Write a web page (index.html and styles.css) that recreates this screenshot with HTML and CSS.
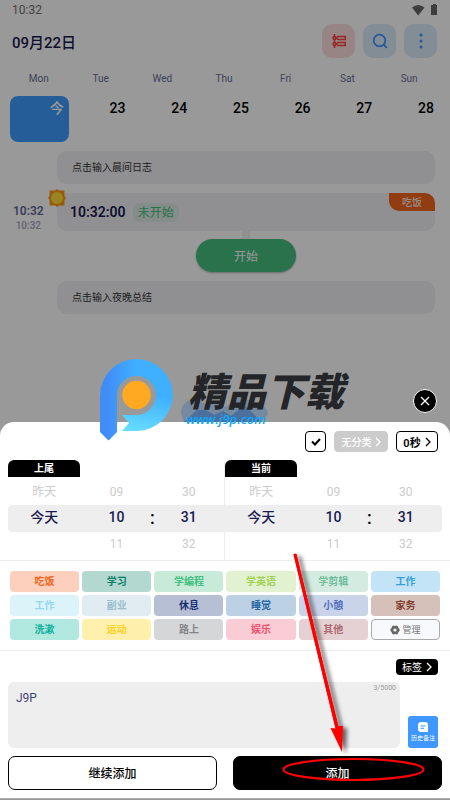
FILE: index.html
```html
<!DOCTYPE html>
<html lang="zh-CN">
<head>
    <meta charset="UTF-8">
    <meta name="viewport" content="width=device-width, initial-scale=1.0">
    <title>添加记录</title>
    <link rel="stylesheet" href="styles.css">
</head>
<body>
<div class="screen">
    <main class="schedule">
        <div class="status-bar">
            <span>10:32</span>
            <svg width="26" height="12" viewBox="0 0 26 12" fill="#686868">
                <path d="M0 3.5Q6.2-1.5 12.5 3.5L6.2 11.5Z"/>
                <path d="M20 1h1V0h3v1h1v10h-6V1z"/>
            </svg>
        </div>

        <header class="header">
            <h1>09月22日</h1>
            <button class="icon-btn red" aria-label="时间轴">
                <svg width="16" height="16" viewBox="0 0 16 16" fill="none" stroke="#f9453e" stroke-width="1.6">
                    <path d="M3.500 1v14"/>
                    <circle cx="3.500" cy="5" r="1.400" fill="#fde3e3"/>
                    <circle cx="3.500" cy="11" r="1.400" fill="#fde3e3"/>
                    <path d="M7 3.500h7.200v3H7L5.500 5zM7 9.500h7.200v3H7L5.500 11z"/>
                </svg>
            </button>
            <button class="icon-btn" aria-label="搜索">
                <svg width="16" height="16" viewBox="0 0 16 16" fill="none" stroke="#3e95ff" stroke-width="1.8" stroke-linecap="round">
                    <circle cx="7.500" cy="7.500" r="5.800"/>
                    <path d="M12 12l2.300 2.300"/>
                </svg>
            </button>
            <button class="icon-btn" aria-label="更多">
                <svg width="16" height="16" viewBox="0 0 16 16" fill="#3e95ff">
                    <circle cx="8" cy="2" r="1.500"/>
                    <circle cx="8" cy="8" r="1.500"/>
                    <circle cx="8" cy="14" r="1.500"/>
                </svg>
            </button>
        </header>

        <div class="week names">
            <span>Mon</span><span>Tue</span><span>Wed</span><span>Thu</span><span>Fri</span><span>Sat</span><span>Sun</span>
        </div>
        <div class="week dates">
            <span class="today">今</span><span>23</span><span>24</span><span>25</span><span>26</span><span>27</span><span>28</span>
        </div>

        <div class="timeline">
            <div class="note">点击输入晨间日志</div>
            <div class="event">
                <div class="event-time">
                    <b>10:32</b>
                    <small>10:32</small>
                </div>
                <svg class="sun" width="18" height="18" viewBox="0 0 18 18">
                    <path d="M9 0l2 1.500h5.500V7L18 9l-1.500 2v5.500H11L9 18l-2-1.500H1.500V11L0 9l1.500-2V1.500H7z" fill="#ff980c"/>
                    <circle cx="9" cy="9" r="6" fill="#ffdf3a"/>
                </svg>
                <strong>10:32:00</strong>
                <span class="state">未开始</span>
                <span class="event-tag">吃饭</span>
            </div>
            <div class="connector"></div>
            <button class="start-btn">开始</button>
            <div class="note">点击输入夜晚总结</div>
        </div>
    </main>

    <div class="overlay"></div>

    <section class="sheet">
        <button class="close-btn" aria-label="关闭">
            <svg width="10" height="10" viewBox="0 0 10 10" stroke="#fff" stroke-width="1.3">
                <path d="M1 1l8 8M9 1L1 9"/>
            </svg>
        </button>

        <div class="options">
            <button class="option check" aria-label="确认">
                <svg width="10" height="8" viewBox="0 0 10 8" fill="none" stroke="#000" stroke-width="2">
                    <path d="M1 3.500l3 3L9 1"/>
                </svg>
            </button>
            <button class="option muted">无分类
                <svg width="6" height="10" viewBox="0 0 6 10" fill="none" stroke="#fff" stroke-width="1.3"><path d="M1 1l4 4-4 4"/></svg>
            </button>
            <button class="option seconds">0秒
                <svg width="6" height="10" viewBox="0 0 6 10" fill="none" stroke="#000" stroke-width="1.3"><path d="M1 1l4 4-4 4"/></svg>
            </button>
        </div>

        <div class="pickers">
            <div class="picker">
                <button class="picker-tab">上尾</button>
                <div class="wheel before"><span>昨天</span><span>09</span><span>30</span></div>
                <div class="wheel selected"><span>今天</span><span>10</span><span>31</span><i>:</i></div>
                <div class="wheel after"><span></span><span>11</span><span>32</span></div>
            </div>
            <div class="picker">
                <button class="picker-tab">当前</button>
                <div class="wheel before"><span>昨天</span><span>09</span><span>30</span></div>
                <div class="wheel selected"><span>今天</span><span>10</span><span>31</span><i>:</i></div>
                <div class="wheel after"><span></span><span>11</span><span>32</span></div>
            </div>
        </div>

        <div class="categories">
            <button class="eat">吃饭</button>
            <button class="study">学习</button>
            <button class="code">学编程</button>
            <button class="english">学英语</button>
            <button class="edit">学剪辑</button>
            <button class="work">工作</button>
            <button class="work-light">工作</button>
            <button class="side">副业</button>
            <button class="rest">休息</button>
            <button class="sleep">睡觉</button>
            <button class="nap">小憩</button>
            <button class="chores">家务</button>
            <button class="wash">洗漱</button>
            <button class="sport">运动</button>
            <button class="road">路上</button>
            <button class="fun">娱乐</button>
            <button class="other">其他</button>
            <button class="manage">
                <svg width="10" height="10" viewBox="0 0 10 10">
                    <path d="M3.500 0.500L5 1.100l1.500-.6 1.600 1 .2 1.600L9.600 4v2l-1.300.9-.2 1.600-1.600 1L5 8.900l-1.500.6-1.600-1-.2-1.600L.4 6V4l1.300-.9.2-1.600z" fill="#666"/>
                    <circle cx="5" cy="5" r="1.600" fill="#f8f9fd"/>
                </svg>管理
            </button>
        </div>

        <div class="tags">
            <button class="tag-btn">标签
                <svg width="6" height="10" viewBox="0 0 6 10" fill="none" stroke="#fff" stroke-width="1.3"><path d="M1 1l4 4-4 4"/></svg>
            </button>
        </div>

        <div class="remark">
            <div class="remark-box">
                <textarea aria-label="备注">J9P</textarea>
                <span class="counter">3/5000</span>
            </div>
            <button class="history-btn">
                <svg width="10" height="10" viewBox="0 0 10 10">
                    <path d="M3 0h4q3 0 3 3v7H3q-3 0-3-3V3q0-3 3-3z" fill="#fff"/>
                    <path d="M2.500 4h5M2.500 6.300h3.500" stroke="#3e98ff" stroke-width="1"/>
                </svg>
                历史备注
            </button>
        </div>

        <div class="actions">
            <button>继续添加</button>
            <button class="primary">添加</button>
        </div>
    </section>

    <svg class="marks" viewBox="0 0 450 800" preserveAspectRatio="xMidYMin meet">
        <defs>
            <linearGradient id="ring" x1="0" y1="0" x2="1" y2="0">
                <stop offset="0.1" stop-color="#418df8"/>
                <stop offset="0.5" stop-color="#3fb0ff"/>
            </linearGradient>
            <linearGradient id="tail" x1="0.6" y1="0" x2="0.3" y2="1">
                <stop offset="0" stop-color="#3fb0ff"/>
                <stop offset="1" stop-color="#66dcff"/>
            </linearGradient>
            <filter id="shadow" x="-50%" y="-10%" width="200%" height="120%">
                <feDropShadow dx="4" dy="2" stdDeviation="2" flood-opacity="0.6"/>
            </filter>
        </defs>
        <!-- logo -->
        <path d="M100 432V395.500A36.300 36.300 0 0 1 172.800 395.500H156A19.500 19.500 0 0 0 117 395.500V432L108.500 440.500Z" fill="url(#ring)"/>
        <path d="M172.800 395A36 36 0 0 1 136.500 431H122L129 423L122 415H136.500A19.500 19.500 0 0 0 156 395Z" fill="url(#tail)"/>
        <circle cx="136.500" cy="395" r="14.300" fill="#ffa922"/>
        <path d="M181 413q0-11 12-14l13 5 8-4 11 7 15-10 17 6q11 3 11 11l-8 8H184z" fill="#5279a8" opacity=".5"/>
        <path d="M184 422l13-12h9l8 5 9-4 8 5 13-11 18 17z" fill="#315f9c" opacity=".6"/>
        <text class="brand" x="188" y="406">精品下载</text>
        <text class="site" x="186" y="424">www.j9p.com</text>
        <!-- pointer to the add button -->
        <g filter="url(#shadow)">
            <path d="M293.500 554.500q1.500-2 3 0L338.500 726L343 726L342 752L330.500 728L335.500 728.500Z" fill="#f00"/>
            <path d="M295 554L337.500 730" stroke="#f00" stroke-width="3"/>
        </g>
        <ellipse cx="353.500" cy="769.500" rx="70" ry="10.500" fill="none" stroke="#f00" stroke-width="2.200"/>
    </svg>
</div>
</body>
</html>
```
FILE: styles.css
```css
* {
    box-sizing: border-box;
}
body {
    margin: 0;
    background: #fff;
    color: #1b1a50;
    font-family: Roboto, "Noto Sans CJK SC", sans-serif;
    font-size: 12px;
}
button {
    display: flex;
    align-items: center;
    justify-content: center;
    padding: 0;
    border: none;
    font-family: inherit;
    font-size: 12px;
    white-space: nowrap;
    cursor: pointer;
}
.screen {
    position: relative;
    display: flex;
    flex-direction: column;
    min-height: 100vh;
    overflow: hidden;
}
.overlay {
    position: absolute;
    inset: 0;
    background: rgba(0, 0, 0, 0.4);
}

/* schedule */
.schedule {
    flex: 1;
}
.status-bar {
    display: flex;
    align-items: center;
    justify-content: space-between;
    height: 20px;
    padding: 0 12px;
    color: #707070;
}
.header {
    display: flex;
    align-items: center;
    gap: 8px;
    padding: 4px 13px 0 12px;
}
.header h1 {
    flex: 1;
    margin: 0;
    font-size: 15px;
    font-weight: 500;
}
.icon-btn {
    width: 33px;
    height: 34px;
    border-radius: 10px;
    background: #dbebfb;
}
.icon-btn.red {
    background: #fcdedf;
}
.week {
    display: grid;
    grid-template-columns: repeat(7, 1fr);
    padding: 0 10px 0 8px;
}
.names {
    margin-top: 12px;
    color: #696d96;
    font-size: 10px;
    line-height: 17px;
    text-align: center;
}
.dates {
    margin-top: 9px;
    color: #000;
    font-size: 14px;
    font-weight: 500;
    line-height: 24px;
    text-align: right;
}
.dates span {
    height: 46px;
    margin: 0 1px 0 2px;
    padding-right: 5px;
}
.dates .today {
    border-radius: 8px;
    background: #3e9bff;
    color: #fff;
}
.timeline {
    padding: 9px 15px 0 57px;
}
.note,
.event {
    border-radius: 10px;
    background: #f0f0f4;
}
.note {
    padding-left: 15px;
    color: #333;
    font-size: 10px;
    line-height: 33px;
}
.event {
    position: relative;
    display: flex;
    align-items: center;
    gap: 7px;
    height: 38px;
    margin-top: 9px;
    padding-left: 13px;
}
.event strong {
    font-size: 14px;
    font-weight: 600;
}
.event-time {
    position: absolute;
    top: 11px;
    left: -44px;
    display: flex;
    flex-direction: column;
    gap: 1px;
    align-items: center;
    color: #646a98;
    line-height: 14px;
}
.event-time b {
    font-weight: 600;
}
.event-time small {
    color: #a5a7bb;
    font-size: 10px;
    font-weight: 500;
}
.sun {
    position: absolute;
    top: -4px;
    left: -9px;
}
.state {
    height: 19px;
    padding: 0 5px;
    border-radius: 6px;
    background: #dcebe5;
    color: #43be7e;
    line-height: 21px;
}
.event-tag {
    position: absolute;
    top: 0;
    right: 0;
    width: 46px;
    height: 18px;
    border-radius: 0 10px 0 10px;
    background: #f2651d;
    color: #fff;
    font-size: 10px;
    line-height: 19px;
    text-align: center;
}
.connector {
    width: 8px;
    height: 8px;
    margin: 0 auto;
    background: #f0f0f4;
}
.start-btn {
    width: 100px;
    height: 33px;
    margin: 0 auto 9px;
    border-radius: 17px;
    background: #45be7f;
    box-shadow: 0 1px 2px rgba(0, 0, 0, 0.3);
    color: #fff;
}

/* bottom sheet */
.sheet {
    position: relative;
    padding-bottom: 8px;
    border-bottom: 1px solid #aaa;
    border-radius: 14px 14px 0 0;
    margin-bottom: 1px;
    background: #fff;
}
.close-btn {
    position: absolute;
    top: -33px;
    right: 13px;
    width: 24px;
    height: 24px;
    border: 1px solid #fff;
    border-radius: 50%;
    background: #000;
}
.options {
    display: flex;
    justify-content: flex-end;
    gap: 8px;
    padding: 9px 12px 8px;
}
.option {
    gap: 4px;
    height: 21px;
    border: 1px solid #000;
    border-radius: 4px;
    background: #fff;
    color: #000;
    font-weight: 500;
}
.check {
    width: 21px;
}
.muted {
    gap: 3px;
    width: 54px;
    border-color: #ccc;
    background: #ccc;
    color: #fff;
    font-size: 10px;
}
.seconds {
    width: 42px;
    font-size: 11px;
    font-weight: 600;
}
.pickers {
    display: grid;
    grid-template-columns: 1fr 1fr;
    padding: 0 8px;
    border-bottom: 1px solid #eee;
}
.picker + .picker {
    box-shadow: -1px 0 #eee;
}
.picker-tab {
    width: 72px;
    height: 17px;
    padding-bottom: 2px;
    border-radius: 6px 6px 0 0;
    background: #000;
    color: #fff;
    font-size: 10px;
    font-weight: 600;
}
.wheel {
    position: relative;
    display: grid;
    grid-template-columns: repeat(3, 1fr);
    height: 28px;
    color: #ccc;
    text-align: center;
}
.wheel.before {
    line-height: 30px;
}
.wheel.after {
    line-height: 24px;
}
.wheel.selected {
    height: 27px;
    background: #eee;
    color: #1b1a50;
    font-size: 14px;
    font-weight: 500;
    line-height: 25px;
}
.picker:first-child .selected {
    border-radius: 4px 0 0 4px;
}
.picker:last-child .selected {
    border-radius: 0 4px 4px 0;
}
.wheel i {
    position: absolute;
    left: 64%;
    width: 5%;
    color: #000;
    font-size: 18px;
    font-style: normal;
}
.categories {
    display: grid;
    grid-template-columns: repeat(6, 1fr);
    gap: 3px;
    padding: 10px;
    border-bottom: 1px solid #eee;
}
.categories button {
    height: 21px;
    padding-bottom: 2px;
    border-radius: 4px;
    font-size: 10px;
    font-weight: 600;
}
.eat { background: #fcd0bd; color: #f2651d; }
.study { background: #b2d8d0; color: #087c66; }
.code { background: #c7ebd8; color: #43be7e; }
.english { background: #e2f1cf; color: #a0d155; }
.edit { background: #d4ebe1; color: #6fbd9b; }
.work { background: #c2e4f6; color: #369fda; }
.work-light { background: #ddf3fa; color: #92d8f0; }
.side { background: #e0ecf1; color: #9bbdcc; }
.rest { background: #b6bfd4; color: #172f71; }
.sleep { background: #bcd1e3; color: #2768a0; }
.nap { background: #c9d3e9; color: #5270bd; }
.chores { background: #d6c1ba; color: #7f3c2b; }
.wash { background: #b1e8e0; color: #08ae99; }
.sport { background: #fff1ad; color: #ffd01b; }
.road { background: #d5d6d8; color: #828488; }
.fun { background: #facdd6; color: #ed5070; }
.other { background: #e5d1d3; color: #ad6870; }
.categories .manage {
    gap: 2px;
    padding: 0;
    border: 1px solid #aaa;
    background: #f8f9fd;
    color: #777;
    font-size: 9px;
    font-weight: 400;
}
.tags {
    display: flex;
    justify-content: flex-end;
    padding: 8px 12px 7px;
}
.tag-btn {
    gap: 4px;
    width: 42px;
    height: 16px;
    padding-bottom: 1px;
    border-radius: 4px;
    background: #000;
    color: #fff;
    font-size: 10px;
}
.remark {
    display: flex;
    align-items: flex-end;
    gap: 8px;
    padding: 0 12px 0 8px;
}
.remark-box {
    position: relative;
    flex: 1;
}
.remark textarea {
    display: block;
    width: 100%;
    height: 66px;
    padding: 9px 8px;
    border: none;
    border-radius: 6px;
    background: #eee;
    color: #44437a;
    font-family: inherit;
    font-size: 12px;
    resize: none;
}
.counter {
    position: absolute;
    top: 2px;
    right: 4px;
    color: #999;
    font-size: 7px;
}
.history-btn {
    flex-direction: column;
    gap: 1px;
    width: 30px;
    height: 32px;
    border-radius: 3px;
    background: #3e98ff;
    color: #fff;
    font-size: 6px;
}
.actions {
    display: grid;
    grid-template-columns: 1fr 1fr;
    gap: 16px;
    padding: 8px 8px 0;
}
.actions button {
    height: 34px;
    padding-bottom: 2px;
    border: 1px solid #000;
    border-radius: 7px;
    background: #fff;
    color: #000;
    font-weight: 500;
}
.actions .primary {
    background: #000;
    color: #fff;
}

/* logo and arrow drawn over the page */
.marks {
    position: absolute;
    top: 0;
    left: 0;
    width: 100%;
    pointer-events: none;
}
.brand {
    fill: #242528;
    font-family: "Noto Sans CJK SC", sans-serif;
    font-size: 39px;
    font-style: italic;
    font-weight: 900;
}
.site {
    fill: #12a8f8;
    font-family: "Open Sans", sans-serif;
    font-size: 13px;
    font-style: italic;
    font-weight: 600;
}
```
